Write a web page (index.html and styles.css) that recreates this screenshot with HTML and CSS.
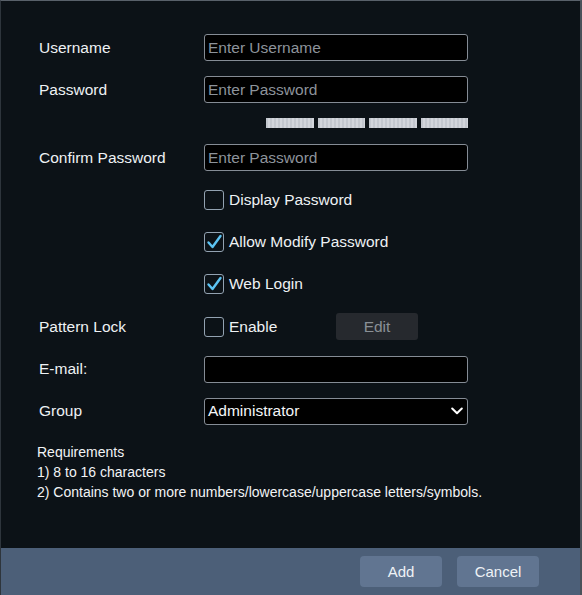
FILE: index.html
```html
<!DOCTYPE html>
<html>
<head>
<meta charset="utf-8">
<link rel="stylesheet" href="styles.css">
</head>
<body>
<div class="dialog">
  <div class="form">
    <div class="row">
      <div class="label">Username</div>
      <div class="input placeholder">Enter Username</div>
    </div>
    <div class="row">
      <div class="label">Password</div>
      <div class="input placeholder">Enter Password</div>
    </div>
    <div class="row bars-row">
      <div class="label"></div>
      <div class="bars"><span class="bar"></span><span class="bar"></span><span class="bar"></span><span class="bar"></span></div>
    </div>
    <div class="row">
      <div class="label">Confirm Password</div>
      <div class="input placeholder">Enter Password</div>
    </div>
    <div class="row">
      <div class="label"></div>
      <div class="check"><span class="box"></span><span>Display Password</span></div>
    </div>
    <div class="row">
      <div class="label"></div>
      <div class="check"><span class="box"><svg viewBox="0 0 20 20" width="20" height="20"><path d="M4.5 10.5 L8.5 15 L16.5 4" fill="none" stroke="#5cc3f2" stroke-width="2.4" stroke-linecap="round" stroke-linejoin="round"/></svg></span><span>Allow Modify Password</span></div>
    </div>
    <div class="row">
      <div class="label"></div>
      <div class="check"><span class="box"><svg viewBox="0 0 20 20" width="20" height="20"><path d="M4.5 10.5 L8.5 15 L16.5 4" fill="none" stroke="#5cc3f2" stroke-width="2.4" stroke-linecap="round" stroke-linejoin="round"/></svg></span><span>Web Login</span></div>
    </div>
    <div class="row">
      <div class="label">Pattern Lock</div>
      <div class="pattern">
        <div class="check enable"><span class="box"></span><span>Enable</span></div>
        <div class="edit">Edit</div>
      </div>
    </div>
    <div class="row">
      <div class="label">E-mail:</div>
      <div class="input"></div>
    </div>
    <div class="row">
      <div class="label">Group</div>
      <div class="input select"><span>Administrator</span><svg viewBox="0 0 12 8" width="12" height="8"><path d="M1.2 1.5 L6 6.3 L10.8 1.5" fill="none" stroke="#ffffff" stroke-width="2" stroke-linecap="round" stroke-linejoin="round"/></svg></div>
    </div>
    <div class="reqs">
      <div>Requirements</div>
      <div>1) 8 to 16 characters</div>
      <div>2) Contains two or more numbers/lowercase/uppercase letters/symbols.</div>
    </div>
  </div>
  <div class="footer">
    <div class="btn">Add</div>
    <div class="btn">Cancel</div>
  </div>
</div>
</body>
</html>
```
FILE: styles.css
```css
html, body {
  margin: 0;
  padding: 0;
  background: #0d1318;
}
body {
  font-family: "Liberation Sans", Arial, sans-serif;
  font-size: 15.5px;
  color: #eef1f4;
}
.dialog {
  width: 582px;
  height: 595px;
  box-sizing: border-box;
  border-top: 1px solid #59616a;
  border-left: 1px solid #2e353c;
  border-right: 2px solid #4a525a;
  background: #0c1217;
  display: flex;
  flex-direction: column;
}
.form {
  flex: 1;
  padding-top: 33px;
  padding-left: 38px;
  display: flex;
  flex-direction: column;
}
.row {
  display: flex;
  align-items: center;
  height: 27px;
  margin-bottom: 15.3px;
}
.label {
  width: 165px;
  flex: none;
}
.input {
  width: 264px;
  height: 27px;
  box-sizing: border-box;
  border: 1px solid #858c95;
  border-radius: 3px;
  background: #000;
  padding: 0 3px;
  display: flex;
  align-items: center;
}
.placeholder {
  color: #8d939b;
}
.select {
  justify-content: space-between;
  color: #f4f6f8;
  padding-right: 4px;
}
.bars-row {
  height: 10px;
  margin-top: -0.5px;
  margin-bottom: 16px;
}
.bars {
  width: 264px;
  display: flex;
  justify-content: flex-end;
  gap: 4px;
}
.bar {
  width: 47.5px;
  height: 10px;
  background: repeating-linear-gradient(90deg, #c3c7ce 0 2px, #d2d5db 2px 4px);
}
.check {
  display: flex;
  align-items: center;
  gap: 5px;
}
.box {
  width: 20px;
  height: 20px;
  box-sizing: border-box;
  border: 1.5px solid #93a2b1;
  border-radius: 3px;
  position: relative;
}
.box svg {
  position: absolute;
  left: -1.5px;
  top: -1.5px;
}
.pattern {
  display: flex;
  align-items: center;
}
.enable {
  width: 132px;
}
.edit {
  width: 82px;
  height: 27px;
  background: #26292e;
  border-radius: 3px;
  color: #8a9096;
  display: flex;
  align-items: center;
  justify-content: center;
}
.reqs {
  margin-top: 1.5px;
  margin-left: -2px;
  font-size: 14px;
  line-height: 20px;
  color: #f2f4f6;
}
.footer {
  height: 47px;
  flex: none;
  background: #4c5f78;
  display: flex;
  justify-content: flex-end;
  align-items: flex-start;
  padding-top: 8px;
  padding-right: 41px;
  gap: 15px;
  box-sizing: border-box;
  font-size: 15px;
}
.btn {
  width: 82px;
  height: 31px;
  background: #617591;
  border-radius: 4px;
  color: #eef2f6;
  display: flex;
  align-items: center;
  justify-content: center;
}
```
